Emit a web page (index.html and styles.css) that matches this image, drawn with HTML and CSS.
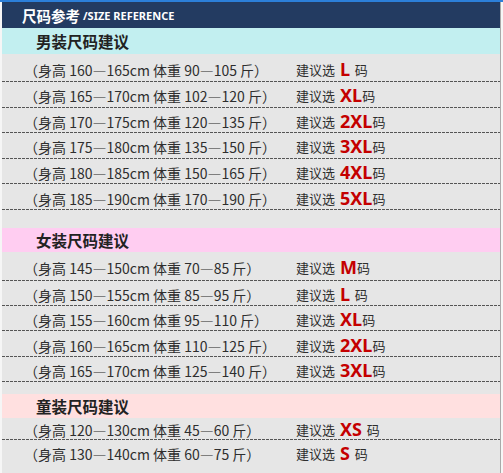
FILE: index.html
```html
<!DOCTYPE html>
<html lang="zh-CN">
<head>
<meta charset="utf-8">
<title>尺码参考</title>
<link rel="stylesheet" href="styles.css">
</head>
<body>
<div class="topline"></div>
<div class="sheet">
  <div class="title"><span class="title-cn">尺码参考</span><span class="title-en">/SIZE REFERENCE</span></div>

  <section class="group men">
    <h2 class="group-head">男装尺码建议</h2>
    <div class="row first"><span class="body">（身高 160—165cm 体重 90—105 斤）</span><span class="advice">建议选<b class="size">L </b>码</span></div>
    <div class="row"><span class="body">（身高 165—170cm 体重 102—120 斤）</span><span class="advice">建议选<b class="size">XL</b>码</span></div>
    <div class="row"><span class="body">（身高 170—175cm 体重 120—135 斤）</span><span class="advice">建议选<b class="size">2XL</b>码</span></div>
    <div class="row"><span class="body">（身高 175—180cm 体重 135—150 斤）</span><span class="advice">建议选<b class="size">3XL</b>码</span></div>
    <div class="row"><span class="body">（身高 180—185cm 体重 150—165 斤）</span><span class="advice">建议选<b class="size">4XL</b>码</span></div>
    <div class="row"><span class="body">（身高 185—190cm 体重 170—190 斤）</span><span class="advice">建议选<b class="size">5XL</b>码</span></div>
  </section>

  <section class="group women">
    <h2 class="group-head">女装尺码建议</h2>
    <div class="row first"><span class="body">（身高 145—150cm 体重 70—85 斤）</span><span class="advice">建议选<b class="size">M</b>码</span></div>
    <div class="row"><span class="body">（身高 150—155cm 体重 85—95 斤）</span><span class="advice">建议选<b class="size">L </b>码</span></div>
    <div class="row"><span class="body">（身高 155—160cm 体重 95—110 斤）</span><span class="advice">建议选<b class="size">XL</b>码</span></div>
    <div class="row"><span class="body">（身高 160—165cm 体重 110—125 斤）</span><span class="advice">建议选<b class="size">2XL</b>码</span></div>
    <div class="row"><span class="body">（身高 165—170cm 体重 125—140 斤）</span><span class="advice">建议选<b class="size">3XL</b>码</span></div>
  </section>

  <section class="group kids">
    <h2 class="group-head">童装尺码建议</h2>
    <div class="row first"><span class="body">（身高 120—130cm 体重 45—60 斤）</span><span class="advice">建议选<b class="size">XS </b>码</span></div>
    <div class="row last"><span class="body">（身高 130—140cm 体重 60—75 斤）</span><span class="advice">建议选<b class="size">S </b>码</span></div>
  </section>
</div>
</body>
</html>
```

FILE: styles.css
```css
html, body {
  margin: 0;
  padding: 0;
}
body {
  background: #f6f6f6;
  font-family: "Noto Sans CJK SC", "Noto Sans", sans-serif;
  width: 503px;
  height: 473px;
  overflow: hidden;
}
.topline {
  height: 2px;
  background: #2c7fd9;
}
.sheet {
  margin-left: 2px;
  width: 498px;
  border-right: 1px solid #a9a9a9;
  background: #e6e6e6;
  height: 471px;
}
.title {
  height: 26px;
  background: #233b61;
  color: #ffffff;
  display: flex;
  align-items: center;
  padding-left: 20px;
  font-weight: bold;
}
.title-cn {
  font-size: 14.5px;
  margin-right: 3px;
}
.title-en {
  font-size: 11px;
  font-family: "Noto Sans", "Noto Sans CJK SC", sans-serif;
}
.group-head {
  margin: 0;
  font-size: 15.5px;
  font-weight: bold;
  color: #222;
  display: flex;
  align-items: center;
  padding-left: 34px;
}
.men .group-head {
  height: 26px;
  background: #c2eff0;
}
.women .group-head {
  height: 24px;
  background: #ffcdf1;
}
.kids .group-head {
  height: 24px;
  background: #ffe0e0;
}
.men {
  margin-bottom: 18px;
}
.women {
  margin-bottom: 12px;
}
.row {
  box-sizing: border-box;
  height: 25.6px;
  padding-top: 4px;
  display: flex;
  align-items: center;
  color: #2e2e2e;
  background-image: linear-gradient(to right, #555 0 3px, transparent 3px 4px);
  background-repeat: repeat-x;
  background-position: left bottom;
  background-size: 4px 1px;
  border-bottom: 1px solid transparent;
  background-origin: border-box;
}
.women .row {
  height: 25.25px;
}
.men .row.first {
  height: 28px;
}
.women .row.first {
  height: 29px;
}
.kids .row.first {
  height: 22px;
}
.kids .row.last {
  height: 26px;
  background-image: none;
}
.body {
  width: 272px;
  padding-left: 22px;
  font-size: 14px;
  white-space: nowrap;
}
.advice {
  font-size: 13px;
  white-space: nowrap;
  line-height: 20px;
}
.size {
  font-family: "Noto Sans", sans-serif;
  font-weight: bold;
  font-size: 18px;
  color: #c40000;
  margin-left: 5px;
  line-height: 1;
  white-space: pre;
  vertical-align: -1px;
}
```
